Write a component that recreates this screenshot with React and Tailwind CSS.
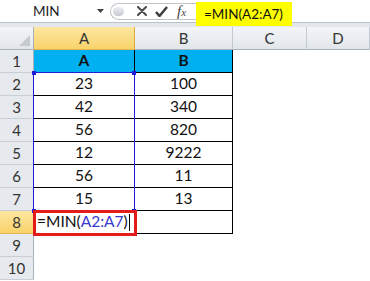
import clsx from "clsx";

const values = [
  ["A", "B"],
  ["23", "100"],
  ["42", "340"],
  ["56", "820"],
  ["12", "9222"],
  ["56", "11"],
  ["15", "13"],
];

const cols = ["A", "B", "C", "D"];

function FormulaBar() {
  return (
    <div className="flex h-[27px] items-start bg-[#e3e6ea]">
      <div className="flex h-[23px] w-[196px] items-center border-b border-[#bcc2ca] bg-white">
        {/* name box */}
        <div className="flex h-full w-[110px] items-center justify-between pl-[33px] pr-[6px]">
          <span className="text-[13.5px] text-[#222]">MIN</span>
          <svg width="7" height="4" viewBox="0 0 7 4">
            <path d="M0 0h7L3.5 4z" fill="#444" />
          </svg>
        </div>
        {/* cancel / enter / fx */}
        <div className="flex h-[17px] flex-1 items-center rounded-l-full border-y border-l border-[#bfc4cb] bg-white">
          <div className="ml-[2px] h-[9px] w-[11px] rounded-full bg-linear-to-b from-[#eceef1] to-[#c6cad0]" />
          <svg className="ml-[13px]" width="10" height="10" viewBox="0 0 10 10">
            <path d="M1 1l8 8M9 1l-8 8" stroke="#4a4a4a" strokeWidth="2" strokeLinecap="round" />
          </svg>
          <svg className="ml-[8px]" width="13" height="11" viewBox="0 0 13 11">
            <path d="M1 6l3.5 4L12 1" stroke="#3f3f3f" strokeWidth="2.6" fill="none" strokeLinejoin="round" />
          </svg>
          <span className="ml-[9px] font-['Liberation_Serif',serif] text-[15px] italic leading-none text-[#444]">
            f<span className="text-[11px]">x</span>
          </span>
        </div>
      </div>
      <div className="flex h-[26px] w-[96px] flex-col bg-white">
        <div className="h-[2px]" />
        <div className="flex h-[24px] items-center bg-[#ffff00] pl-[8px] text-[13.5px] text-[#111]">
          =MIN(A2:A7)
        </div>
      </div>
      <div className="h-[23px] flex-1 border-b border-[#bcc2ca] bg-white" />
    </div>
  );
}

function HeaderRow() {
  return (
    <>
      <div className="relative h-[23px] border-r border-b border-[#a9b1bb] bg-linear-to-b from-[#f2f4f7] to-[#e2e6eb]">
        <svg className="absolute right-[3px] bottom-[3px]" width="11" height="11" viewBox="0 0 11 11">
          <path d="M11 0v11H0z" fill="#c5cad1" />
        </svg>
      </div>
      {cols.map((c) => (
        <div
          key={c}
          className={clsx(
            "flex h-[23px] items-center justify-center border-r border-b text-[15px] text-[#333]",
            c === "A"
              ? "border-r-[#e0ad45] border-b-[#e8b24a] bg-linear-to-b from-[#fde6a0] to-[#f9d36a]"
              : "border-r-[#c3c9d1] border-b-[#a9b1bb] bg-linear-to-b from-[#f3f5f8] to-[#e2e6eb]"
          )}
        >
          {c}
        </div>
      ))}
    </>
  );
}

function Row({ n }) {
  const vals = values[n - 1];
  const inTable = n <= 8;
  return (
    <>
      <div
        className={clsx(
          "flex h-[23px] items-center justify-center border-r border-b text-[15px] text-[#333]",
          n === 8
            ? "border-r-[#e0ad45] border-b-[#e8b24a] bg-linear-to-b from-[#fde6a0] to-[#f9d36a]"
            : "border-r-[#a9b1bb] border-b-[#c9ced5] bg-[#e6e9ed]"
        )}
      >
        {n}
      </div>
      {[0, 1].map((i) => (
        <div
          key={i}
          className={clsx(
            "flex h-[23px] items-center text-[15.5px] text-[#111]",
            inTable && "border-r border-b border-black",
            n === 1 && "bg-[#00b0f0] font-bold",
            n === 8 && i === 0 ? "justify-start pl-[3px]" : "justify-center"
          )}
        >
          {vals ? vals[i] : null}
          {n === 8 && i === 0 && (
            <>
              <span>=MIN(</span>
              <span className="text-[#3a3ad0]">A2:A7</span>
              <span>)</span>
              <span className="ml-[1px] inline-block h-[17px] w-px bg-black" />
            </>
          )}
        </div>
      ))}
      <div className="h-[23px]" />
      <div className="h-[23px]" />
    </>
  );
}

export default function App() {
  return (
    <div className="h-[281px] w-[370px] overflow-hidden bg-white font-['Lato',sans-serif]">
      <FormulaBar />
      <div className="relative grid grid-cols-[34px_101px_98px_74px_1fr]">
        <HeaderRow />
        {[1, 2, 3, 4, 5, 6, 7, 8, 9, 10].map((n) => (
          <Row key={n} n={n} />
        ))}
        {/* formula range highlight A2:A7 */}
        <div className="pointer-events-none absolute top-[45px] left-[33px] h-[140px] w-[102px] border border-[#1c1cd9]">
          <span className="absolute -top-[2px] -left-[2px] h-[4px] w-[4px] bg-[#1c1cd9]" />
          <span className="absolute -top-[2px] -right-[2px] h-[4px] w-[4px] bg-[#1c1cd9]" />
          <span className="absolute -bottom-[2px] -left-[2px] h-[4px] w-[4px] bg-[#1c1cd9]" />
          <span className="absolute -right-[2px] -bottom-[2px] h-[4px] w-[4px] bg-[#1c1cd9]" />
        </div>
        {/* active cell A8 */}
        <div className="pointer-events-none absolute top-[183px] left-[33px] h-[26px] w-[104px] border-[3px] border-[#e31b1b]" />
      </div>
    </div>
  );
}
